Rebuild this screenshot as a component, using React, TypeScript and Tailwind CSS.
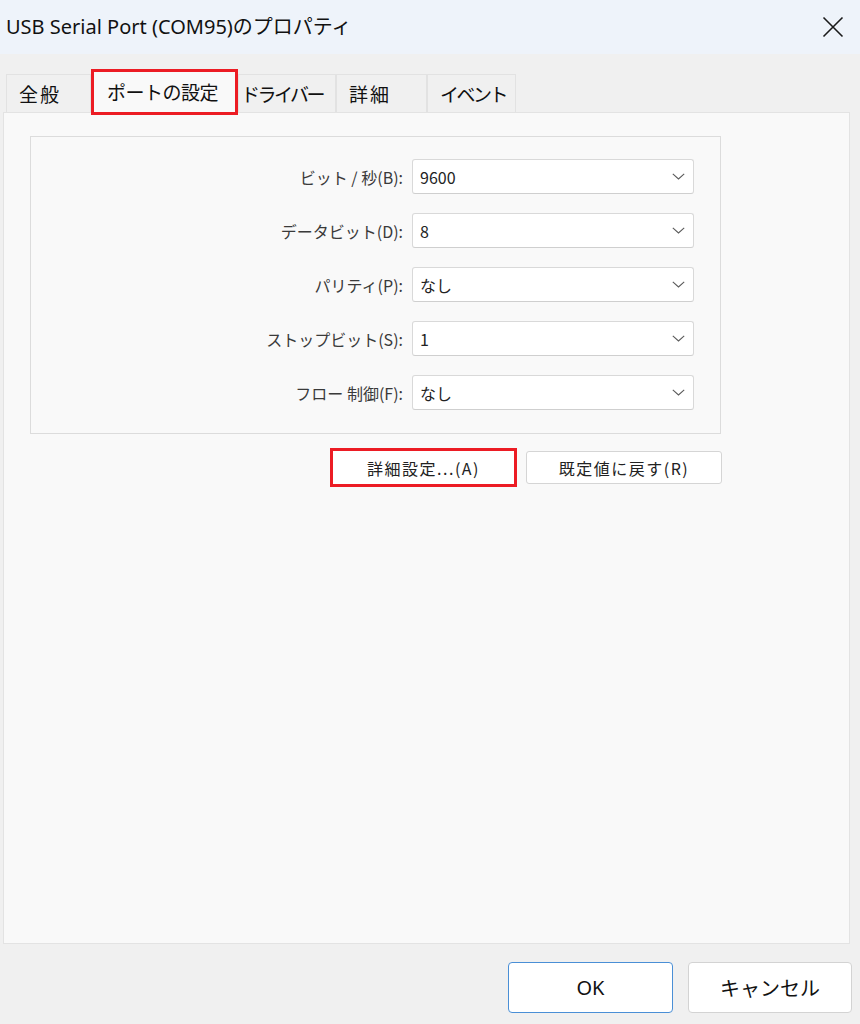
// シリアルポートのプロパティ ダイアログ
const UI_FONT = 'font-["Noto_Sans","Noto_Sans_CJK_JP",sans-serif]';
const JP_FONT = 'font-["Noto_Sans_CJK_JP",sans-serif]';

const settings = [
  { label: 'ビット / 秒(B):', value: '9600' },
  { label: 'データビット(D):', value: '8' },
  { label: 'パリティ(P):', value: 'なし' },
  { label: 'ストップビット(S):', value: '1' },
  { label: 'フロー 制御(F):', value: 'なし' },
];

// タブごとの幅・余白・字間 (元画面の見た目に合わせる)
const tabs = [
  { name: '全般', cls: 'w-[85px] pl-[12px] tracking-[2px]' },
  { name: 'ポートの設定', cls: 'w-[147px] pl-[13px] tracking-[-0.5px]', active: true },
  { name: 'ドライバー', cls: 'w-[98px] pl-[2px] tracking-[-2.5px]' },
  { name: '詳細', cls: 'w-[91px] pl-[12px] tracking-[2px]' },
  { name: 'イベント', cls: 'w-[89px] pl-[12px] tracking-[-2.5px]' },
];

function Chevron() {
  return (
    <svg width="13" height="7" viewBox="0 0 13 7" fill="none">
      <path d="M0.8 0.8 L6.5 6 L12.2 0.8" stroke="#5a5a5a" strokeWidth="1.1" />
    </svg>
  );
}

function CloseIcon() {
  return (
    <svg width="22" height="22" viewBox="0 0 22 22" fill="none">
      <path d="M1.5 1.5 L20.5 20.5 M20.5 1.5 L1.5 20.5" stroke="#1a1a1a" strokeWidth="1.6" />
    </svg>
  );
}

export default function App() {
  return (
    <div className={`w-[860px] h-[1024px] bg-[#f0f0f0] flex flex-col overflow-hidden ${UI_FONT}`}>
      {/* ========== タイトルバー ========== */}
      <div className="h-[54px] bg-[#eef3fa] flex items-center justify-between pl-[6px] pr-[16px] shrink-0">
        <span className="text-[20px] text-[#111] leading-none">USB Serial Port (COM95)のプロパティ</span>
        <CloseIcon />
      </div>

      {/* ========== タブ ========== */}
      <div className="flex items-end pl-[6px] mt-[15px] h-[43px] shrink-0">
        {tabs.map((tab) =>
          tab.active ? (
            <div
              key={tab.name}
              className={`${tab.cls} h-[46px] -mb-[3px] relative z-10 border-[3px] border-[#ec1c24] bg-[#f9f9f9] flex items-center whitespace-nowrap text-[19px] text-[#111] ${JP_FONT}`}
            >
              {tab.name}
            </div>
          ) : (
            <div
              key={tab.name}
              className={`${tab.cls} h-[38px] border border-b-0 border-[#e2e2e2] bg-[#f0f0f0] flex items-center whitespace-nowrap pt-[2px] text-[19px] text-[#111] ${JP_FONT}`}
            >
              {tab.name}
            </div>
          ),
        )}
      </div>

      {/* ========== 設定パネル ========== */}
      <div className="flex-1 ml-[3px] mr-[10px] bg-[#f9f9f9] border border-[#e3e3e3] pt-[23px] pl-[26px]">
        <div className="w-[691px] border border-[#dcdcdc] pt-[22px] pb-[23px] pr-[26px] flex flex-col gap-[19px]">
          {settings.map((row) => (
            <div key={row.label} className="flex items-center justify-end gap-[9px]">
              <span className={`text-[16px] text-[#3a3a3a] ${JP_FONT}`}>{row.label}</span>
              <div className="w-[282px] h-[35px] bg-white border border-[#d9d9d9] border-b-[#cfcfcf] rounded-[3px] flex items-center justify-between pl-[7px] pr-[8px]">
                <span className={`text-[16px] text-[#222] ${JP_FONT}`}>{row.value}</span>
                <Chevron />
              </div>
            </div>
          ))}
        </div>

        <div className="w-[692px] flex justify-end items-center gap-[9px] mt-[14px]">
          <button
            type="button"
            className={`w-[187px] h-[39px] bg-white border-[3px] border-[#ec1c24] text-[16px] text-[#222] tracking-[1.5px] ${JP_FONT}`}
          >
            詳細設定...(A)
          </button>
          <button
            type="button"
            className={`w-[196px] h-[33px] bg-white border border-[#d5d5d5] rounded-[3px] text-[16px] text-[#222] tracking-[1.5px] ${JP_FONT}`}
          >
            既定値に戻す(R)
          </button>
        </div>
      </div>

      {/* ========== OK / キャンセル ========== */}
      <div className="h-[80px] shrink-0 flex justify-end items-start gap-[15px] pt-[18px] pr-[8px]">
        <button
          type="button"
          className="w-[165px] h-[51px] bg-white border border-[#4a8fd6] rounded-[4px] text-[20px] text-[#111]"
        >
          OK
        </button>
        <button
          type="button"
          className={`w-[164px] h-[51px] bg-white border border-[#d3d3d3] rounded-[4px] text-[20px] text-[#111] ${JP_FONT}`}
        >
          キャンセル
        </button>
      </div>
    </div>
  );
}
